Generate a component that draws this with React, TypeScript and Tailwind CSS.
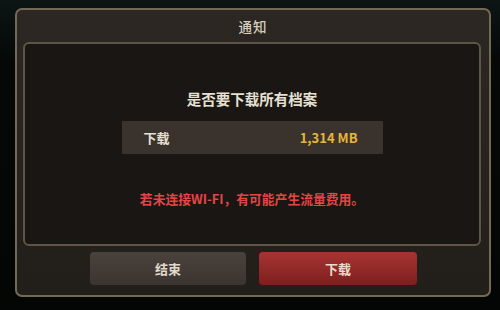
const App = () => {
  return (
    <div className="w-[500px] h-[310px] bg-[linear-gradient(180deg,#0c1514_0%,#060808_20%,#040505_100%)] pt-[8px] pl-[15px] font-['Noto_Sans_CJK_SC','Noto_Sans',sans-serif]">
      <div className="w-[476px] h-[289px] rounded-[7px] border-2 border-[#736a55] bg-[linear-gradient(180deg,#2c2722_0%,#221e1a_100%)] flex flex-col">
        {/* Title */}
        <div className="h-[32px] flex items-center justify-center text-[13.5px] font-medium text-[#d6cfbf] tracking-[1px]">
          通知
        </div>

        {/* Inner panel */}
        <div className="ml-[6px] w-[458px] h-[204px] rounded-[6px] border-2 border-[#5d5545] bg-[#1a1614] flex flex-col items-center">
          <div className="mt-[45px] text-[14.5px] font-bold text-[#e6e0d2] leading-[20px]">
            是否要下载所有档案
          </div>
          <div className="mt-[12px] w-[261px] h-[33px] bg-[#3a332d] flex items-center justify-between pl-[22px] pr-[25px] text-[13px] font-bold">
            <span className="text-[#e6e0d2]">下载</span>
            <span className="text-[#e6b53a] font-semibold">1,314 MB</span>
          </div>
          <div className="mt-[36px] text-[12.8px] font-bold text-[#e44545] leading-[18px]">
            若未连接WI-FI，有可能产生流量费用。
          </div>
        </div>

        {/* Buttons */}
        <div className="mt-[6px] ml-[73px] flex gap-[13px]">
          <button
            type="button"
            className="w-[156px] h-[33px] rounded-[4px] bg-[linear-gradient(180deg,#4a423c_0%,#3b3430_100%)] text-[13px] font-bold text-[#e0dacd]"
          >
            结束
          </button>
          <button
            type="button"
            className="w-[158px] h-[33px] rounded-[4px] bg-[linear-gradient(180deg,#a83432_0%,#7c1f1e_100%)] text-[13px] font-bold text-[#eadbd0]"
          >
            下载
          </button>
        </div>
      </div>
    </div>
  );
};

export default App;
